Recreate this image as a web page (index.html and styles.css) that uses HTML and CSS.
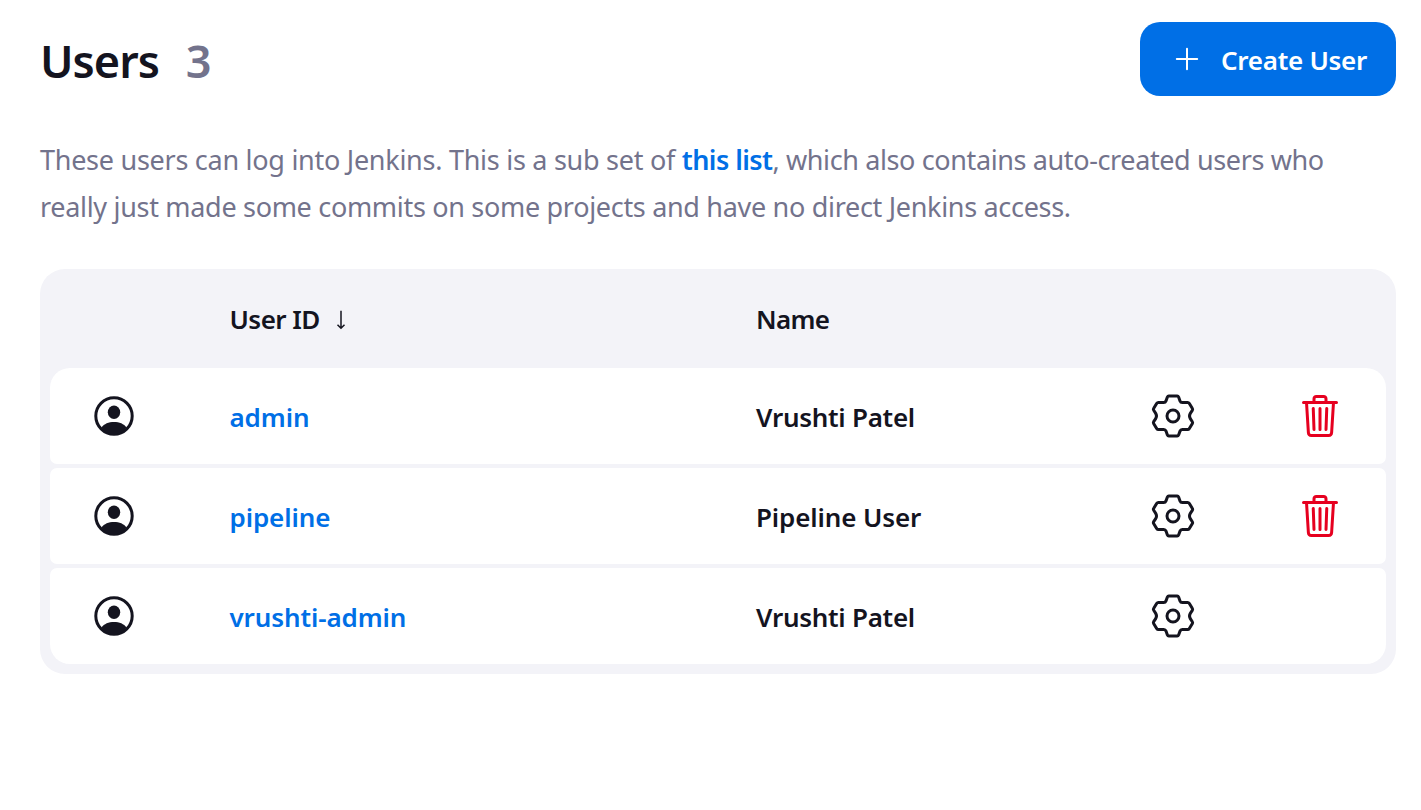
FILE: index.html
```html
<!DOCTYPE html>
<html lang="en">
<head>
<meta charset="utf-8">
<title>Users</title>
<link rel="stylesheet" href="styles.css">
</head>
<body>
<svg width="0" height="0" class="sprite">
  <symbol id="person" viewBox="0 0 48 48">
    <circle cx="24" cy="24" r="18.200" fill="none" stroke="currentColor" stroke-width="3"/>
    <ellipse cx="24" cy="20.200" rx="6.200" ry="6.800" fill="currentColor"/>
    <path d="M11.500 35.500C14 31.800 18.700 30 24 30s10 1.800 12.500 5.500C33.500 40 29 42.500 24 42.500S14.500 40 11.500 35.500z" fill="currentColor"/>
  </symbol>
  <symbol id="gear" viewBox="0 0 48 48">
    <g fill="none" stroke="currentColor" stroke-width="3" stroke-linecap="round" stroke-linejoin="round">
      <path d="M19.800 4H28.200Q29.200 4 29.600 5L31 8.900Q31.600 10.500 33.300 10.500L38.600 10.400Q39.700 10.400 40.200 11.200L43.400 16.600Q43.900 17.400 43.300 18.300L41.300 21.400Q39.700 24 41.300 26.600L43.300 29.700Q43.900 30.600 43.400 31.400L40.200 36.800Q39.700 37.600 38.600 37.600L33.300 37.500Q31.600 37.500 31 39.100L29.600 43Q29.200 44 28.200 44H19.800Q18.800 44 18.400 43L17 39.100Q16.400 37.500 14.700 37.500L9.400 37.600Q8.300 37.600 7.800 36.800L4.600 31.400Q4.100 30.600 4.700 29.700L6.700 26.600Q8.300 24 6.700 21.400L4.700 18.300Q4.100 17.400 4.600 16.600L7.800 11.200Q8.300 10.400 9.400 10.400L14.700 10.500Q16.400 10.500 17 8.900L18.400 5Q18.800 4 19.800 4z"/>
      <circle cx="24" cy="24" r="6"/>
    </g>
  </symbol>
  <symbol id="trash" viewBox="0 0 512 512">
    <path d="M112 112l20 320c.95 18.49 14.4 32 32 32h184c17.67 0 30.87-13.51 32-32l20-320M80 112h352M192 112V72a23.93 23.93 0 0124-24h80a23.93 23.93 0 0124 24v40M256 176v224M184 176l8 224M328 176l-8 224" fill="none" stroke="currentColor" stroke-width="32" stroke-linecap="round" stroke-linejoin="round"/>
  </symbol>
</svg>
<main class="page">
  <header class="bar">
    <h1 class="title">Users <span class="count">3</span></h1>
    <a class="button"><svg class="plus" viewBox="0 0 24 24"><path d="M12 1.800v20.400M1.800 12h20.400" fill="none" stroke="currentColor" stroke-width="2" stroke-linecap="round"/></svg><span>Create User</span></a>
  </header>
  <p class="description"><span class="line-one">These users can log into Jenkins. This is a sub set of <a class="link">this list</a><span class="line-rest">, which also contains auto-created users who</span></span><br><span class="line-two">really just made some commits on some projects and have no direct Jenkins access.</span></p>
  <section class="table">
    <div class="head"><span></span><span class="user-id">User ID <svg class="arrow" viewBox="0 0 12 20"><path d="M6 .8v17.400M2.500 14.800L6 18.300l3.500-3.500" fill="none" stroke="currentColor" stroke-width="1.500"/></svg></span><span class="name-head">Name</span></div>
    <div class="rows">
      <div class="row"><svg class="icon"><use href="#person"/></svg><a class="id">admin</a><span class="name">Vrushti Patel</span><svg class="icon"><use href="#gear"/></svg><svg class="icon danger"><use href="#trash"/></svg></div>
      <div class="row"><svg class="icon"><use href="#person"/></svg><a class="id">pipeline</a><span class="name pipeline-user">Pipeline User</span><svg class="icon"><use href="#gear"/></svg><svg class="icon danger"><use href="#trash"/></svg></div>
      <div class="row"><svg class="icon"><use href="#person"/></svg><a class="id">vrushti-admin</a><span class="name">Vrushti Patel</span><svg class="icon"><use href="#gear"/></svg></div>
    </div>
  </section>
</main>
</body>
</html>
```
FILE: styles.css
```css
* { box-sizing: border-box; }
body { margin: 0; background: #fff; color: #14141f; font-family: "Segoe UI", "Noto Sans", sans-serif; }
.sprite { display: block; }
.page { padding: 22px 25px 0 40px; }
.bar { display: flex; justify-content: space-between; height: 74px; }
.title { display: flex; gap: 27px; margin: 0; font-size: 45px; line-height: 78px; font-weight: 600; letter-spacing: -1px; }
.count { color: #73738c; }
.button { display: flex; align-items: center; width: 256px; height: 74px; padding-left: 35px; gap: 22px; border-radius: 20px; background: #006fe6; color: #fff; font-size: 26px; font-weight: 600; letter-spacing: -0.27px; white-space: nowrap; line-height: 74px; }
.button span { padding-top: 2px; }
.plus { width: 24px; height: 24px; flex: none; }
.description { margin: 40px 0 0; color: #73738c; font-size: 27px; line-height: 47px; white-space: nowrap; }
.line-one { letter-spacing: -0.27px; }
.line-rest { letter-spacing: -0.38px; }
.line-two { letter-spacing: -0.31px; }
.link, .id { color: #006fe6; font-weight: 600; }
.link { letter-spacing: -0.56px; }
.table { margin-top: 39px; padding: 0 10px 10px; border-radius: 25px; background: #f3f3f8; font-size: 26px; font-weight: 600; white-space: nowrap; }
.head, .row { display: grid; grid-template-columns: 139.5px 526.5px 393px 147px 48px; align-items: center; padding-left: 40px; }
.head { height: 99px; padding-top: 1px; }
.user-id { letter-spacing: -0.55px; }
.name-head { letter-spacing: -0.7px; }
.arrow { width: 12px; height: 20px; margin-left: 9px; vertical-align: -1px; }
.rows { display: grid; gap: 4px; }
.row { height: 96px; border-radius: 7px; background: #fff; }
.row:first-child { border-radius: 20px 20px 7px 7px; }
.row:last-child { border-radius: 7px 7px 20px 20px; }
.icon { display: block; width: 48px; height: 48px; }
.id, .name { padding-top: 2px; }
.id { letter-spacing: -0.1px; }
.name { letter-spacing: -0.27px; }
.pipeline-user { letter-spacing: -0.12px; }
.danger { color: #e6001f; }
```
